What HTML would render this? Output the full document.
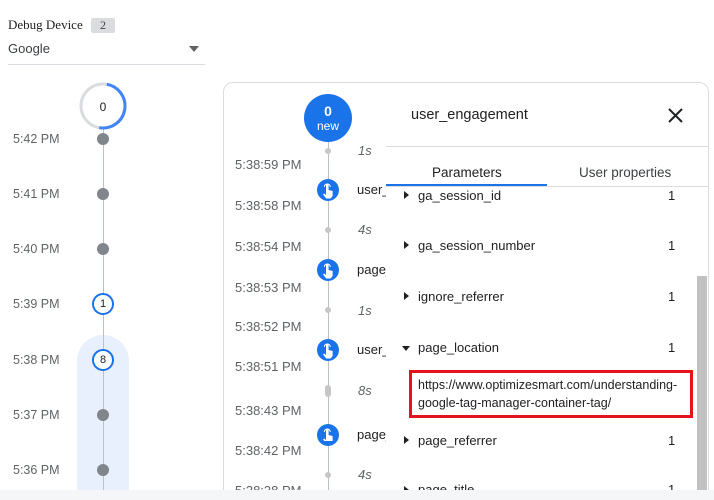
<!DOCTYPE html>
<html style="overflow:hidden"><head><meta charset="utf-8"><style>
*{margin:0;padding:0;box-sizing:border-box}
html,body{width:714px;height:500px;overflow:hidden}
body{background:#fff;font-family:"Liberation Sans",Arial,sans-serif;position:relative;color:#202124}
.a{position:absolute;white-space:nowrap}
.lt{font-size:12.5px;color:#5f6368;left:13px}
.dot{position:absolute;left:97px;width:12px;height:12px;border-radius:50%;background:#80868b}
.oc{position:absolute;left:92px;width:22px;height:22px;border-radius:50%;border:2px solid #1a73e8;background:#fff;font-size:11px;text-align:center;line-height:18px;color:#202124}
.tm{font-size:13px;color:#5f6368;left:235px}
.du{font-size:13px;font-style:italic;color:#5f6368;left:358px}
.nm{font-size:13px;color:#202124;left:357px}
.ic{position:absolute;left:317px;width:22px;height:22px;border-radius:50%;background:#1a73e8}
.sd{position:absolute;left:325px;width:6px;height:6px;border-radius:50%;background:#c4c7c5}
.pn{font-size:13px;color:#202124;left:418px}
.pv{font-size:13px;color:#202124;left:668px}
.tri{position:absolute;left:404px;width:0;height:0;border-top:4px solid transparent;border-bottom:4px solid transparent;border-left:5px solid #202124}
</style></head><body>
<div class="a" style="left:8px;top:17px;font-family:'Liberation Serif',serif;font-size:13px">Debug Device</div>
<div class="a" style="left:91px;top:18px;width:24px;height:15px;background:#dadce0;border-radius:2px;font-family:'Liberation Serif',serif;font-size:12px;text-align:center;line-height:15px;color:#444">2</div>
<div class="a" style="left:8px;top:41px;font-size:13px;color:#3c4043">Google</div>
<div class="a" style="left:189px;top:46px;border-left:5px solid transparent;border-right:5px solid transparent;border-top:6px solid #5f6368"></div>
<div class="a" style="left:8px;top:64px;width:197px;height:1px;background:#dadce0"></div>

<div class="a" style="left:77px;top:335px;width:52px;height:160px;background:#e8f0fe;border-radius:26px 26px 0 0"></div>
<div class="a" style="left:103px;top:128px;width:1px;height:362px;background:#bdc1c6"></div>
<svg class="a" style="left:79px;top:82px" width="48" height="48"><circle cx="24" cy="24" r="22" fill="#fff" stroke="#dadce0" stroke-width="3"/><path d="M24 2 A22 22 0 0 1 24 46" fill="none" stroke="#4285f4" stroke-width="3" transform="rotate(10 24 24)"/><text x="24" y="29" font-size="12" text-anchor="middle" font-family="Liberation Sans" fill="#202124">0</text></svg>
<div class="a lt" style="top:132px">5:42 PM</div><div class="dot" style="top:133px"></div>
<div class="a lt" style="top:187px">5:41 PM</div><div class="dot" style="top:188px"></div>
<div class="a lt" style="top:242px">5:40 PM</div><div class="dot" style="top:243px"></div>
<div class="a lt" style="top:297px">5:39 PM</div><div class="oc" style="top:293px">1</div>
<div class="a lt" style="top:353px">5:38 PM</div><div class="oc" style="top:349px">8</div>
<div class="a lt" style="top:408px">5:37 PM</div><div class="dot" style="top:409px"></div>
<div class="a lt" style="top:463px">5:36 PM</div><div class="dot" style="top:464px"></div>

<div class="a" style="left:223px;top:82px;width:486px;height:420px;border:1px solid #dadce0;border-radius:10px;background:#fff"></div>
<div class="a" style="left:328px;top:140px;width:1px;height:350px;background:#bdc1c6"></div>
<div class="a" style="left:304px;top:94px;width:48px;height:48px;border-radius:50%;background:#1a73e8;color:#fff;text-align:center;font-size:12px;line-height:14px;padding-top:10px"><b style="font-size:14px">0</b><br>new</div>
<div class="sd" style="top:148px"></div><div class="sd" style="top:227px"></div><div class="sd" style="top:307px"></div><div class="a" style="left:325px;top:385px;width:6px;height:12px;border-radius:3px;background:#c4c7c5"></div><div class="sd" style="top:472px"></div>
<div class="a tm" style="top:157px">5:38:59 PM</div>
<div class="a tm" style="top:198px">5:38:58 PM</div>
<div class="a tm" style="top:239px">5:38:54 PM</div>
<div class="a tm" style="top:280px">5:38:53 PM</div>
<div class="a tm" style="top:319px">5:38:52 PM</div>
<div class="a tm" style="top:359px">5:38:51 PM</div>
<div class="a tm" style="top:403px">5:38:43 PM</div>
<div class="a tm" style="top:443px">5:38:42 PM</div>
<div class="a tm" style="top:483px">5:38:38 PM</div>
<div class="a du" style="top:143px">1s</div>
<div class="a du" style="top:222px">4s</div>
<div class="a du" style="top:303px">1s</div>
<div class="a du" style="top:383px">8s</div>
<div class="a du" style="top:467px">4s</div>
<div class="ic" style="top:179px"></div><div class="ic" style="top:259px"></div><div class="ic" style="top:339px"></div><div class="ic" style="top:424px"></div>
<svg class="a" style="left:317px;top:179px" width="22" height="262"><g fill="#fff" id="h"><path d="M9 6 a1.3 1.3 0 0 1 2.6 0 v5 l4 1 v5 l-2 2.5 h-4.5 l-3-4 1-1 1.9 1.5z"/><path d="M7.3 8 a3 3 0 1 1 6 0" fill="none" stroke="#fff" stroke-width="1"/></g><use href="#h" y="80"/><use href="#h" y="160"/><use href="#h" y="245"/></svg>
<div class="a nm" style="top:182px">user_</div>
<div class="a nm" style="top:262px">page_</div>
<div class="a nm" style="top:342px">user_</div>
<div class="a nm" style="top:427px">page_</div>

<div class="a" style="left:386px;top:90px;width:320px;height:400px;background:#fff"></div>
<div class="a" style="left:411px;top:107px;font-size:14.5px">user_engagement</div>
<svg class="a" style="left:668px;top:108px" width="15" height="15"><path d="M1 1L14 14M14 1L1 14" stroke="#202124" stroke-width="2"/></svg>
<div class="a" style="left:386px;top:146px;width:322px;height:1px;background:#dadce0"></div>
<div class="a" style="left:432px;top:165px;font-size:13.5px">Parameters</div>
<div class="a" style="left:579px;top:165px;font-size:13.5px;color:#3c4043">User properties</div>
<div class="a" style="left:386px;top:186px;width:322px;height:1px;background:#dadce0"></div>
<div class="a" style="left:386px;top:184px;width:161px;height:2px;background:#1a73e8"></div>

<div class="tri" style="top:191px"></div><div class="a pn" style="top:188px">ga_session_id</div><div class="a pv" style="top:188px">1</div>
<div class="tri" style="top:241px"></div><div class="a pn" style="top:238px">ga_session_number</div><div class="a pv" style="top:238px">1</div>
<div class="tri" style="top:292px"></div><div class="a pn" style="top:289px">ignore_referrer</div><div class="a pv" style="top:289px">1</div>
<div class="a" style="left:402px;top:346px;border-left:4px solid transparent;border-right:4px solid transparent;border-top:5px solid #202124"></div><div class="a pn" style="top:340px">page_location</div><div class="a pv" style="top:340px">1</div>
<div class="a" style="left:409px;top:370px;width:284px;height:48px;border:3px solid #e4141f"></div>
<div class="a" style="left:418px;top:378px;font-size:12.5px;width:274px;overflow:hidden;text-overflow:ellipsis">https://www.optimizesmart.com/understanding-</div>
<div class="a" style="left:418px;top:396px;font-size:12.5px">google-tag-manager-container-tag/</div>
<div class="tri" style="top:436px"></div><div class="a pn" style="top:433px">page_referrer</div><div class="a pv" style="top:433px">1</div>
<div class="tri" style="top:486px"></div><div class="a pn" style="top:482px">page_title</div><div class="a pv" style="top:482px">1</div>
<div class="a" style="left:697px;top:276px;width:10px;height:214px;background:#c1c1c1"></div>
<div class="a" style="left:0;top:490px;width:714px;height:10px;background:#f5f6f8"></div>
</body></html>
